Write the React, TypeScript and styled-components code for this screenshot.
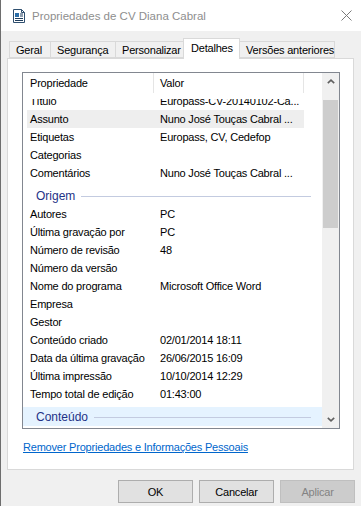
import React from 'react';
import styled, { createGlobalStyle } from 'styled-components';

const GlobalStyle = createGlobalStyle`
    html, body {
        margin: 0;
        padding: 0;
        background: #f0f0f0;
    }
    body {
        font-family: 'Liberation Sans', Arial, sans-serif;
        font-size: 11px;
        letter-spacing: -0.2px;
        color: #000;
    }
`;

const Window = styled.div`
    box-sizing: border-box;
    width: 361px;
    height: 506px;
    border-left: 1px solid #6e6e6e;
    background: #f0f0f0;
    display: flex;
    flex-direction: column;
    overflow: hidden;
`;

const TitleBar = styled.div`
    height: 31px;
    flex: none;
    background: #fff;
    display: flex;
    align-items: center;
    padding: 0 9px 0 11px;
`;

const Caption = styled.span`
    margin-left: 6px;
    font-size: 11.5px;
    letter-spacing: 0;
    color: #8e8e8e;
`;

const CloseButton = styled.span`
    margin-left: auto;
    display: flex;
`;

const Body = styled.div`
    padding: 7px 0 0 6px;
    display: flex;
    flex-direction: column;
`;

const TabStrip = styled.div`
    display: flex;
    align-items: flex-end;
    padding-left: 2px;
    height: 21px;
    position: relative;
    z-index: 1;
    margin-bottom: -1px;
`;

const Tab = styled.div<{ $w: number; $active?: boolean }>`
    box-sizing: border-box;
    width: ${p => p.$w}px;
    height: ${p => (p.$active ? 21 : 17)}px;
    margin-bottom: ${p => (p.$active ? 0 : 1)}px;
    padding-left: ${p => (p.$active ? 7 : 6)}px;
    display: flex;
    align-items: center;
    white-space: nowrap;
    padding-bottom: ${p => (p.$active ? 2 : 0)}px;
    background: ${p => (p.$active ? '#fff' : '#f0f0f0')};
    border: 1px solid #d9d9d9;
    border-bottom: ${p => (p.$active ? 'none' : '1px solid #d9d9d9')};
    & + & {
        margin-left: -1px;
    }
`;

const Panel = styled.div`
    box-sizing: border-box;
    width: 347px;
    height: 412px;
    background: #fff;
    border: 1px solid #d9d9d9;
    padding: 13px 0 0 14px;
`;

const ListView = styled.div`
    box-sizing: border-box;
    width: 318px;
    height: 357px;
    border: 1px solid #828790;
    background: #fff;
    display: flex;
    overflow: hidden;
`;

const ListMain = styled.div`
    width: 299px;
    display: flex;
    flex-direction: column;
    overflow: hidden;
`;

const Header = styled.div`
    height: 26px;
    flex: none;
    display: flex;
    align-items: flex-start;
`;

const HeaderCell = styled.div<{ $w: number; $pad: number }>`
    box-sizing: border-box;
    width: ${p => p.$w}px;
    height: 20px;
    padding-left: ${p => p.$pad}px;
    display: flex;
    align-items: center;
    border-right: 1px solid #e5e5e5;
`;

const Rows = styled.div`
    flex: 1;
    overflow: hidden;
`;

const Track = styled.div`
    margin-top: -7px;
`;

const Row = styled.div<{ $hl?: boolean }>`
    height: 18px;
    width: 277px;
    margin-left: 4px;
    display: flex;
    align-items: center;
    white-space: nowrap;
    background: ${p => (p.$hl ? '#eeeeee' : 'transparent')};
`;

const NameCell = styled.span`
    width: 127px;
    padding-left: 3px;
    box-sizing: border-box;
    flex: none;
`;

const ValueCell = styled.span`
    padding-left: 6px;
`;

const Group = styled.div`
    padding-top: 4px;
`;

const GroupHeader = styled.div<{ $sel?: boolean }>`
    height: 19px;
    display: flex;
    align-items: center;
    padding-left: 13px;
    background: ${p => (p.$sel ? '#e5f3ff' : 'transparent')};
    color: #1e3287;
    font-size: 12px;
    letter-spacing: 0;
`;

const GroupLine = styled.span`
    flex: 1;
    height: 1px;
    margin: 1px 11px 0 6px;
    background: #c3cbe0;
`;

const ScrollBar = styled.div`
    width: 17px;
    flex: none;
    background: #f0f0f0;
    display: flex;
    flex-direction: column;
`;

const ScrollButton = styled.div`
    height: 17px;
    flex: none;
    display: flex;
    align-items: center;
    justify-content: center;
`;

const Thumb = styled.div`
    width: 15px;
    margin-left: 1px;
    background: #cdcdcd;
`;

const Spacer = styled.div`
    flex: 1;
`;

const Link = styled.a`
    display: block;
    margin-top: 12px;
    margin-left: 1px;
    color: #0066cc;
    text-decoration: underline;
    line-height: 13px;
    cursor: pointer;
`;

const Footer = styled.div`
    display: flex;
    justify-content: flex-end;
    gap: 6px;
    padding: 10px 6px 0 0;
`;

const Button = styled.button`
    box-sizing: border-box;
    width: 75px;
    height: 23px;
    font: inherit;
    letter-spacing: -0.2px;
    background: #e1e1e1;
    border: 1px solid #adadad;
    color: #000;
    padding: 0;
    &:disabled {
        background: #cccccc;
        border-color: #bfbfbf;
        color: #838383;
    }
`;

const DocIcon = () => (
    <svg width="14" height="16" viewBox="0 0 14 16">
        <path d="M1.5 1.5h8l3 3v10h-11z" fill="#fff" stroke="#2f4f6f" />
        <path d="M9.5 1.5v3h3" fill="none" stroke="#2f4f6f" />
        <rect x="3" y="5" width="4" height="4" fill="#2b6ea8" />
        <path d="M8 6h3M8 8h3M3 10.5h8M3 12.5h8" stroke="#1f3d5c" strokeWidth="1" />
    </svg>
);

const CloseIcon = () => (
    <svg width="11" height="11" viewBox="0 0 11 11">
        <path d="M0.5 0.5l10 10M10.5 0.5l-10 10" stroke="#7a7a7a" strokeWidth="1" />
    </svg>
);

const Chevron = ({ up }: { up?: boolean }) => (
    <svg width="8" height="5" viewBox="0 0 8 5">
        <path
            d={up ? 'M0.8 4.2L4 1.2l3.2 3' : 'M0.8 0.8L4 3.8l3.2-3'}
            fill="none"
            stroke="#606060"
            strokeWidth="1.6"
        />
    </svg>
);

const tabs = [
    { label: 'Geral', w: 42 },
    { label: 'Segurança', w: 66 },
    { label: 'Personalizar', w: 69 },
    { label: 'Detalhes', w: 57, active: true },
    { label: 'Versões anteriores', w: 96 },
];

const description = [
    ['Título', 'Europass-CV-20140102-Ca...'],
    ['Assunto', 'Nuno José Touças Cabral ...'],
    ['Etiquetas', 'Europass, CV, Cedefop'],
    ['Categorias', ''],
    ['Comentários', 'Nuno José Touças Cabral ...'],
];

const origin = [
    ['Autores', 'PC'],
    ['Última gravação por', 'PC'],
    ['Número de revisão', '48'],
    ['Número da versão', ''],
    ['Nome do programa', 'Microsoft Office Word'],
    ['Empresa', ''],
    ['Gestor', ''],
    ['Conteúdo criado', '02/01/2014 18:11'],
    ['Data da última gravação', '26/06/2015 16:09'],
    ['Última impressão', '10/10/2014 12:29'],
    ['Tempo total de edição', '01:43:00'],
];

export default function App() {
    return (
        <>
            <GlobalStyle />
            <Window>
                <TitleBar>
                    <DocIcon />
                    <Caption>Propriedades de CV Diana Cabral</Caption>
                    <CloseButton>
                        <CloseIcon />
                    </CloseButton>
                </TitleBar>
                <Body>
                    <TabStrip>
                        {tabs.map(t => (
                            <Tab key={t.label} $w={t.w} $active={t.active}>
                                {t.label}
                            </Tab>
                        ))}
                    </TabStrip>
                    <Panel>
                        <ListView>
                            <ListMain>
                                <Header>
                                    <HeaderCell $w={131} $pad={7}>
                                        Propriedade
                                    </HeaderCell>
                                    <HeaderCell $w={150} $pad={6}>
                                        Valor
                                    </HeaderCell>
                                </Header>
                                <Rows>
                                    <Track>
                                        {description.map(([name, value]) => (
                                            <Row key={name} $hl={name === 'Assunto'}>
                                                <NameCell>{name}</NameCell>
                                                <ValueCell>{value}</ValueCell>
                                            </Row>
                                        ))}
                                        <Group>
                                            <GroupHeader>
                                                Origem
                                                <GroupLine />
                                            </GroupHeader>
                                        </Group>
                                        {origin.map(([name, value]) => (
                                            <Row key={name}>
                                                <NameCell>{name}</NameCell>
                                                <ValueCell>{value}</ValueCell>
                                            </Row>
                                        ))}
                                        <Group>
                                            <GroupHeader $sel>
                                                Conteúdo
                                                <GroupLine />
                                            </GroupHeader>
                                        </Group>
                                    </Track>
                                </Rows>
                            </ListMain>
                            <ScrollBar>
                                <ScrollButton>
                                    <Chevron up />
                                </ScrollButton>
                                <Thumb style={{ marginTop: 10, height: 128 }} />
                                <Spacer />
                                <ScrollButton>
                                    <Chevron />
                                </ScrollButton>
                            </ScrollBar>
                        </ListView>
                        <Link>Remover Propriedades e Informações Pessoais</Link>
                    </Panel>
                </Body>
                <Footer>
                    <Button>OK</Button>
                    <Button>Cancelar</Button>
                    <Button disabled>Aplicar</Button>
                </Footer>
            </Window>
        </>
    );
}
